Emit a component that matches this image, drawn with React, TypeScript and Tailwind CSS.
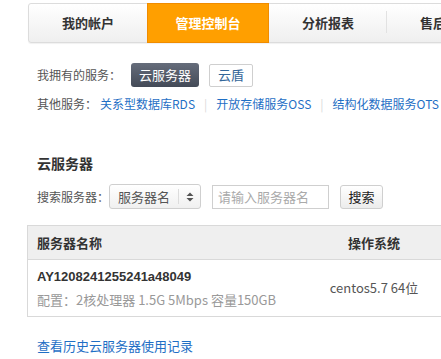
const font = { fontFamily: '"Microsoft YaHei", "Noto Sans CJK SC", "Liberation Sans", sans-serif' };

const tabs = ['我的帐户', '管理控制台', '分析报表', '售后服务'];

const Tab = ({ label, active, last }: { label: string; active?: boolean; last?: boolean }) => (
  <div
    className={
      active
        ? 'w-[122px] h-[40px] flex items-center justify-center bg-[#ff9f00] text-white text-[13px] font-bold border border-[#f08c00] -my-px'
        : 'w-[118px] h-full flex items-center justify-center text-[13px] font-bold text-[#333] relative'
    }
  >
    {label}
    {!active && !last && label === '分析报表' && (
      <span className="absolute right-0 top-[7px] h-[22px] w-px bg-[#e2e2e2]" />
    )}
  </div>
);

const App = () => {
  return (
    <div className="w-[441px] h-[359px] overflow-hidden bg-white text-[12px] text-[#333]" style={font}>
      <div className="pt-[3px] pl-[28px]">
        <div className="w-[560px] h-[40px] flex rounded-[3px] border border-[#dcdcdc] bg-gradient-to-b from-white to-[#efefef] shadow-[0_1px_1px_rgba(0,0,0,0.06)]">
          {tabs.map((t, i) => (
            <Tab key={t} label={t} active={i === 1} last={i === tabs.length - 1} />
          ))}
        </div>
      </div>

      <div className="pl-[37px]">
        <div className="mt-[20px] flex items-center h-[24px] text-[#555]">
          <span className="w-[94px]">我拥有的服务：</span>
          <span className="h-[24px] w-[68px] flex items-center justify-center rounded-[3px] bg-gradient-to-b from-[#666d7b] to-[#434a57] text-white text-[13px]">云服务器</span>
          <span className="ml-[10px] h-[23px] w-[44px] flex items-center justify-center rounded-[2px] border border-[#cfcfcf] text-[#336699] text-[13px]">云盾</span>
        </div>

        <div className="mt-[9px] flex items-center h-[16px] text-[#555] whitespace-nowrap">
          <span className="w-[63px]">其他服务：</span>
          <a className="text-[#1f6fc5]">关系型数据库RDS</a>
          <span className="mx-[9px] text-[#dadada]">|</span>
          <a className="text-[#1f6fc5]">开放存储服务OSS</a>
          <span className="mx-[9px] text-[#dadada]">|</span>
          <a className="text-[#1f6fc5]">结构化数据服务OTS</a>
        </div>

        <div className="mt-[41px] h-[20px] flex items-center text-[14px] font-bold text-[#333]">云服务器</div>

        <div className="mt-[11px] flex items-center h-[25px] text-[#555]">
          <span className="w-[72px]">搜索服务器：</span>
          <div className="h-[25px] w-[92px] flex items-center rounded-[3px] border border-[#cfcfcf] bg-gradient-to-b from-white to-[#f0f0f0]">
            <span className="w-[68px] pl-[8px] text-[13px] text-[#555]">服务器名</span>
            <span className="h-[15px] w-px bg-[#dcdcdc]" />
            <svg width="8" height="10" viewBox="0 0 8 10" className="ml-[7px]">
              <path d="M4 0.5 L7.5 4 H0.5 Z M4 9.5 L7.5 6 H0.5 Z" fill="#555" />
            </svg>
          </div>
          <div className="ml-[11px] h-[24px] w-[117px] border border-[#cfcfcf] flex items-center pl-[5px] text-[13px] text-[#aaa]">请输入服务器名</div>
          <div className="ml-[11px] h-[24px] w-[43px] rounded-[3px] border border-[#cfcfcf] bg-gradient-to-b from-white to-[#ececec] flex items-center justify-center text-[13px] text-[#222]">搜索</div>
        </div>
      </div>

      <div className="ml-[27px] mt-[16px] w-[430px] border border-[#d9d9d9]">
        <div className="h-[34px] flex items-center bg-[#efefef] border-b border-[#d9d9d9] font-bold text-[13px] text-[#333]">
          <span className="w-[282px] pl-[9px]">服务器名称</span>
          <span className="w-[128px] text-center">操作系统</span>
        </div>
        <div className="h-[56px] flex items-center">
          <div className="w-[282px] pl-[9px]">
            <div className="font-bold text-[13px] text-[#333]" style={{ fontFamily: '"Liberation Sans", "Noto Sans CJK SC", sans-serif' }}>AY1208241255241a48049</div>
            <div className="mt-[4px] text-[#999] text-[13px]">配置：2核处理器 1.5G 5Mbps 容量150GB</div>
          </div>
          <div className="w-[128px] text-center text-[13px] text-[#555]">centos5.7 64位</div>
        </div>
      </div>

      <div className="pl-[37px] mt-[19px]">
        <a className="text-[13px] text-[#1f6fc5]">查看历史云服务器使用记录</a>
      </div>
    </div>
  );
};

export default App;
